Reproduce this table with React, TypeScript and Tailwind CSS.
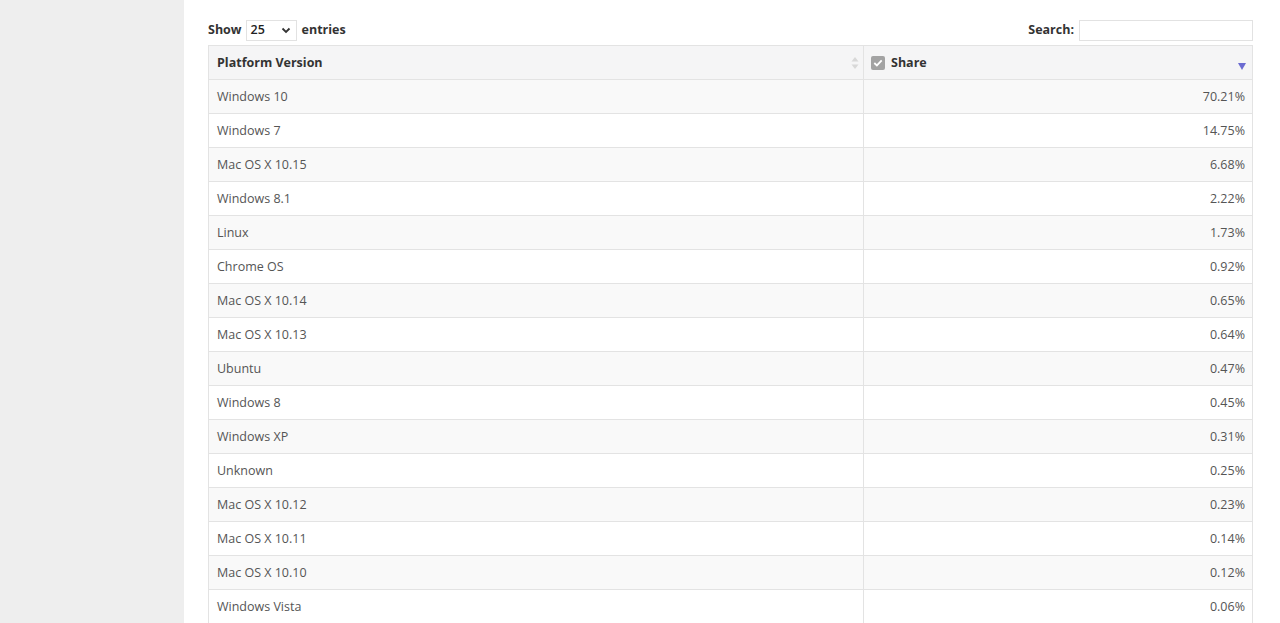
import React from "react";

const rows: [string, string][] = [
  ["Windows 10", "70.21%"],
  ["Windows 7", "14.75%"],
  ["Mac OS X 10.15", "6.68%"],
  ["Windows 8.1", "2.22%"],
  ["Linux", "1.73%"],
  ["Chrome OS", "0.92%"],
  ["Mac OS X 10.14", "0.65%"],
  ["Mac OS X 10.13", "0.64%"],
  ["Ubuntu", "0.47%"],
  ["Windows 8", "0.45%"],
  ["Windows XP", "0.31%"],
  ["Unknown", "0.25%"],
  ["Mac OS X 10.12", "0.23%"],
  ["Mac OS X 10.11", "0.14%"],
  ["Mac OS X 10.10", "0.12%"],
  ["Windows Vista", "0.06%"],
];

export default function App() {
  return (
    <div
      className="flex h-[623px] w-[1280px] overflow-hidden bg-white text-[12.5px] text-[#555]"
      style={{ fontFamily: '"Open Sans", "Noto Sans", sans-serif' }}
    >
      <div className="w-[184px] shrink-0 bg-[#eeeeee]" />
      <div className="flex w-[1069px] flex-col pl-[24px] pt-[19px]">
        <div className="flex h-[21px] items-center justify-between pt-[1px]">
          <div className="flex items-center font-bold text-[#333]">
            <span>Show</span>
            <div className="ml-[4px] mr-[5px] flex h-[21px] w-[51px] items-center justify-between border border-[#e2e2e2] bg-white pl-[4px] pr-[5px] font-semibold text-[#222]">
              <span>25</span>
              <svg width="10" height="7" viewBox="0 0 10 7">
                <path d="M1.5 1.5 L5 5 L8.5 1.5" fill="none" stroke="#333" strokeWidth="1.8" />
              </svg>
            </div>
            <span>entries</span>
          </div>
          <div className="flex items-center font-bold text-[#333]">
            <span>Search:</span>
            <div className="ml-[5px] h-[21px] w-[174px] border border-[#e2e2e2] bg-white" />
          </div>
        </div>
        <div className="mt-[5px] border-l border-r border-[#e3e3e3]">
          <div className="flex h-[35px] border-t border-b border-[#e3e3e3] bg-[#f5f5f6] font-bold text-[#333]">
            <div className="flex w-[655px] items-center justify-between border-r border-[#e3e3e3] pl-[8px] pr-[4px] pt-[1px]">
              <span>Platform Version</span>
              <svg width="8" height="14" viewBox="0 0 8 14">
                <path d="M4 1 L7.5 5.5 L0.5 5.5 Z" fill="#d8d8d8" />
                <path d="M4 13 L7.5 8.5 L0.5 8.5 Z" fill="#d8d8d8" />
              </svg>
            </div>
            <div className="relative flex flex-1 items-center pl-[7px] pt-[1px]">
              <span className="mr-[6px] flex h-[14px] w-[14px] items-center justify-center rounded-[2px] bg-[#a3a3a3]">
                <svg width="10" height="8" viewBox="0 0 10 8">
                  <path d="M1.3 4 L3.9 6.4 L8.7 1.4" fill="none" stroke="#fff" strokeWidth="1.8" />
                </svg>
              </span>
              <span>Share</span>
              <svg className="absolute right-[6px] top-[17px]" width="8" height="7" viewBox="0 0 8 7">
                <path d="M0 0 L8 0 L4 7 Z" fill="#6b6bd1" />
              </svg>
            </div>
          </div>
          {rows.map(([name, share], i) => (
            <div
              key={name}
              className={`flex h-[34px] border-b border-[#e3e3e3] ${i % 2 === 0 ? "bg-[#f9f9f9]" : "bg-white"}`}
            >
              <div className="flex w-[655px] items-center border-r border-[#e3e3e3] pl-[8px] pt-[1px]">{name}</div>
              <div className="flex flex-1 items-center justify-end pr-[7px] pt-[1px]">{share}</div>
            </div>
          ))}
        </div>
      </div>
    </div>
  );
}
